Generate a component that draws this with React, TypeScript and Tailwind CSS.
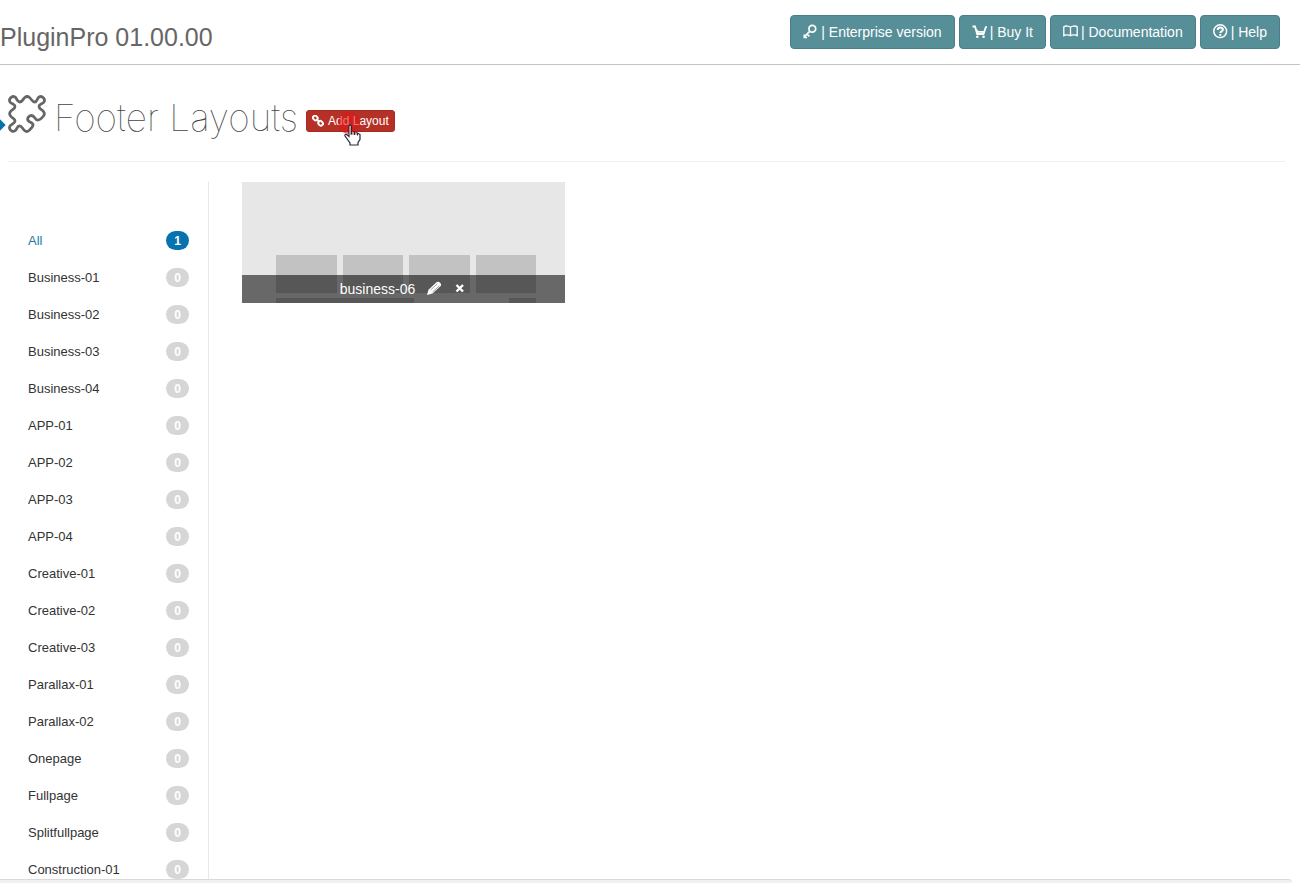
import type { ReactNode } from "react";

const categories = [
  "Business-01", "Business-02", "Business-03", "Business-04",
  "APP-01", "APP-02", "APP-03", "APP-04",
  "Creative-01", "Creative-02", "Creative-03",
  "Parallax-01", "Parallax-02", "Onepage", "Fullpage", "Splitfullpage", "Construction-01",
];

function KeyIcon() {
  return (
    <svg aria-hidden="true" className="h-4 w-4" viewBox="0 0 16 16" fill="none" stroke="currentColor" strokeWidth="1.7">
      <circle cx="9.300" cy="4.800" r="3.400" />
      <path d="M7 7.200 1 13M1.300 10.600v2.800h2.800M4 10l2.400 2.400" />
    </svg>
  );
}

function CartIcon() {
  return (
    <svg aria-hidden="true" className="h-4 w-4" viewBox="0 0 16 16" fill="none" stroke="currentColor" strokeWidth="1.8">
      <path d="M.5 2.500h2.500l2.200 7.500h6.300L13.800 3.200H15M4 5.500l2 2.300h6" />
      <circle cx="5.300" cy="12.800" r="1.300" fill="currentColor" stroke="none" />
      <circle cx="11.600" cy="12.800" r="1.300" fill="currentColor" stroke="none" />
    </svg>
  );
}

function BookIcon() {
  return (
    <svg aria-hidden="true" className="h-4 w-4" viewBox="0 0 16 16" fill="none" stroke="currentColor" strokeWidth="1.3">
      <path d="M7.500 3.200C6.300 1.700 2.200 1.700.8 2.800v8.800C2.300 10.600 6 10.600 7.500 11.800 9 10.600 12.700 10.600 14.200 11.600V2.800C12.800 1.700 8.700 1.700 7.500 3.200v8.600" />
    </svg>
  );
}

function HelpIcon() {
  return (
    <svg aria-hidden="true" className="h-4 w-4" viewBox="0 0 16 16" fill="none" stroke="currentColor" strokeWidth="1.5">
      <circle cx="7.200" cy="7.200" r="6.400" />
      <path d="M4.700 6c0-3.200 5.200-3.200 5.200-.4C9.900 7.500 7.300 7.200 7.300 9.100M7.300 10v1.700" strokeWidth="2.100" />
    </svg>
  );
}

function PuzzleIcon() {
  return (
    <svg aria-hidden="true" className="h-[38px] w-[38px] shrink-0" viewBox="0 0 38 38" fill="none" stroke="#666" strokeWidth="2.800" strokeLinejoin="round">
      <path d="M31 11.500C31 14 34 14.500 35.500 16.500 36.600 18 36.600 19.500 35.500 21 33.500 23.500 31.500 25.500 29 25 27 24.500 26.500 20.500 23.500 20.500 20.500 20.500 18.500 24 20.500 26 22 27.500 25 27.500 25 30 25 32 22.500 34 21 35.500 19.500 36.800 18 36.800 16.500 35.500 14.500 34 14 30.800 11.500 30.800 9 30.800 9 34.200 7.200 35.600 4 37.800 0 34 2.200 30.800 3.500 29 7 28.500 7 26 7 23.500 4 23 2.500 21 1.400 19.500 1.400 18 2.500 16.500 4 14.500 7 14 7 11.500 7 9 3.500 9 2.200 7.200 0 4 4 0 7.200 2.200 9 3.500 9 7 11.500 7 14.500 7 15 4 16.800 2.500 18.300 1.300 20 1.300 21.500 2.500 23.500 4 24 7 27 7 29 7 29 3.500 30.800 2.200 34 0 38 4 35.800 7.200 34.500 9 31 9 31 11.500Z" />
    </svg>
  );
}

function LinkIcon() {
  return (
    <svg aria-hidden="true" className="h-3 w-3" viewBox="0 0 12 12" fill="none" stroke="currentColor" strokeWidth="1.900">
      <rect x="-2.400" y="-2" width="4.800" height="4" rx="1.800" transform="translate(3.300 3) rotate(45)" />
      <rect x="-2.400" y="-2" width="4.800" height="4" rx="1.800" transform="translate(8.600 8.300) rotate(45)" />
      <path d="m4.500 4.200 3 3" />
    </svg>
  );
}

function HeaderLink({ icon, label }: { icon: ReactNode; label: string }) {
  return (
    <a href="#" className="flex h-[34px] items-center gap-0.5 rounded border border-[#4a7f89] bg-[#578f99] px-3 text-sm whitespace-nowrap text-white">
      {icon}
      <span>| {label}</span>
    </a>
  );
}

function CategoryRow({ name, count, active = false }: { name: string; count: number; active?: boolean }) {
  return (
    <li>
      <a href="#" className={`flex h-[37px] items-center justify-between ${active ? "text-[#2478a5]" : "text-[#333]"}`}>
        <span>{name}</span>
        <span className={`flex h-[19px] w-[23px] items-center justify-center rounded-full text-xs font-bold text-white ${active ? "bg-[#0673ae]" : "bg-[#d6d6d6]"}`}>
          {count}
        </span>
      </a>
    </li>
  );
}

export default function App() {
  return (
    <div className="flex h-screen flex-col overflow-hidden bg-white font-['Liberation_Sans',Arial,sans-serif] text-[#333]">
      <header className="flex h-[65px] shrink-0 items-start justify-between border-b border-[#c4c4c8] pt-[15px] pr-5">
        <div className="pt-1 text-[25px] leading-9 text-[#666]">PluginPro 01.00.00</div>
        <nav className="flex gap-1">
          <HeaderLink icon={<KeyIcon />} label="Enterprise version" />
          <HeaderLink icon={<CartIcon />} label="Buy It" />
          <HeaderLink icon={<BookIcon />} label="Documentation" />
          <HeaderLink icon={<HelpIcon />} label="Help" />
        </nav>
      </header>

      <main className="relative flex min-h-0 flex-1 flex-col overflow-hidden pr-[15px] pl-2">
        <div className="absolute top-14 -left-1 h-2 w-2 rotate-45 bg-[#0673ae]" />
        <div className="flex h-[97px] shrink-0 items-start border-b border-[#eee] pt-[30px]">
          <PuzzleIcon />
          <h1 className="ml-2 font-[Inter,sans-serif] text-[37px] leading-[46px] font-thin whitespace-nowrap text-[#444]">Footer Layouts</h1>
          <div className="relative mt-[15px] ml-2">
            <button type="button" className="flex h-[22px] items-center gap-1 rounded-[3px] border border-[#a52a20] bg-[#b53026] px-[5px] text-xs whitespace-nowrap text-white">
              <LinkIcon />
              Add Layout
            </button>
            <span className="pointer-events-none absolute top-0.5 left-8 h-[22px] w-[22px] rounded-full bg-[#e01515]/60" />
            <svg aria-hidden="true" className="pointer-events-none absolute top-3.5 left-[38px] h-[22px] w-[18px]" viewBox="0 0 18 22">
              <path d="M5 2.500c0-1.800 2.500-1.800 2.500 0v5l3 .5 3 1 2.500 1.500v5l-2 3v2.500H6v-2L1 12c-.5-1.500 1-2 2-1.200l2 1.700Z" fill="#fff" stroke="#222b38" strokeWidth="1.200" />
              <path d="M5.600 2.500h1.400v5l6 1.200v2H5.600Z" fill="#e88a86" />
              <path d="M7.500 7v3.500M10.500 8v3M13.500 9v2.500" stroke="#222b38" />
            </svg>
          </div>
        </div>

        <div className="flex min-h-0 flex-1 pt-5">
          <aside className="w-[201px] shrink-0 border-r border-[#e8e8e8] pt-10 pr-[19px] pl-5 text-[13px]">
            <ul>
              <CategoryRow name="All" count={1} active />
              {categories.map((name) => (
                <CategoryRow key={name} name={name} count={0} />
              ))}
            </ul>
          </aside>

          <section className="flex-1 pl-[33px]">
            <article className="relative h-[121px] w-[323px] overflow-hidden bg-[#e7e7e7] pt-[73px] pr-[29px] pl-[34px]">
              <div className="grid grid-cols-4 gap-1.5">
                <div className="h-[38px] bg-[#c2c2c2]" />
                <div className="h-[38px] bg-[#c2c2c2]" />
                <div className="h-[38px] bg-[#c2c2c2]" />
                <div className="h-[38px] bg-[#c2c2c2]" />
              </div>
              <div className="mt-[5px] flex justify-between">
                <div className="h-2 w-[138px] bg-[#c2c2c2]" />
                <div className="h-2 w-[27px] bg-[#c2c2c2]" />
              </div>
              <div className="absolute inset-x-0 bottom-0 flex h-7 items-center justify-center bg-black/55 pr-0.5 text-sm text-white">
                <span>business-06</span>
                <button type="button" aria-label="Edit" className="ml-3">
                  <svg aria-hidden="true" className="h-4 w-4" viewBox="0 0 16 16" fill="currentColor">
                    <path d="M0 14 1.500 8.800 9.500 1.200C11.500-.8 15.500 3 13.700 5L5.500 12.500Z" />
                    <path d="m3.500 9 7-6.300M5.500 11l7-6.300" stroke="#666" strokeWidth=".6" />
                  </svg>
                </button>
                <button type="button" aria-label="Remove" className="ml-3">
                  <svg aria-hidden="true" className="h-2.5 w-2.5" viewBox="0 0 10 10" stroke="currentColor" strokeWidth="2.400">
                    <path d="m1.500 1 6.500 6.500M8 1 1.500 7.500" />
                  </svg>
                </button>
              </div>
            </article>
          </section>
        </div>
      </main>

      <div className="mr-2 h-1 shrink-0 rounded-tr border-t border-[#dadada] bg-[#f1f1f1]" />
    </div>
  );
}
